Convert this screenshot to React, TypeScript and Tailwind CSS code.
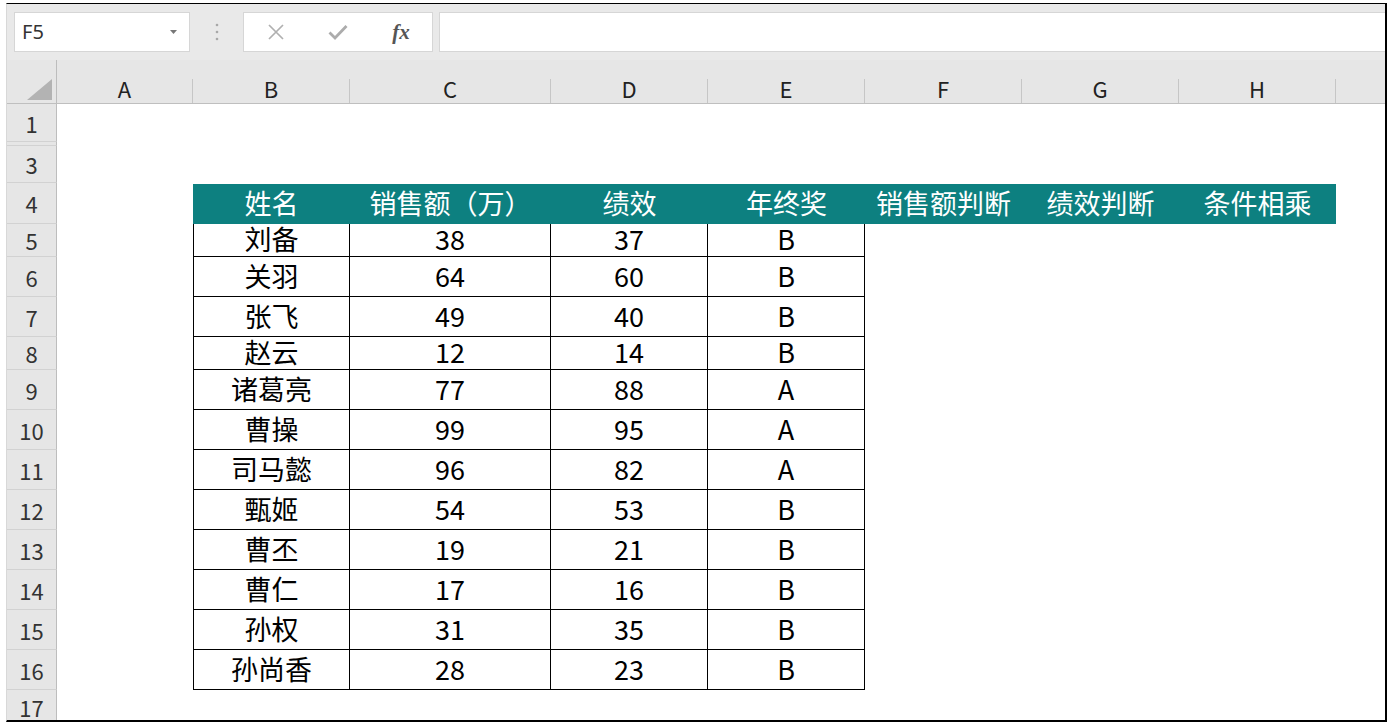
import React from "react";

const COLS = [
  { key: "A", w: "w-[136px]" },
  { key: "B", w: "w-[157px]" },
  { key: "C", w: "w-[201px]" },
  { key: "D", w: "w-[157px]" },
  { key: "E", w: "w-[157px]" },
  { key: "F", w: "w-[157px]" },
  { key: "G", w: "w-[157px]" },
  { key: "H", w: "w-[157px]" },
];

const HEAD = ["姓名", "销售额（万）", "绩效", "年终奖", "销售额判断", "绩效判断", "条件相乘"];

const DATA: [number, string, number, number, string, string][] = [
  [5, "刘备", 38, 37, "B", "h-[33px]"],
  [6, "关羽", 64, 60, "B", "h-[40px]"],
  [7, "张飞", 49, 40, "B", "h-[40px]"],
  [8, "赵云", 12, 14, "B", "h-[33px]"],
  [9, "诸葛亮", 77, 88, "A", "h-[40px]"],
  [10, "曹操", 99, 95, "A", "h-[40px]"],
  [11, "司马懿", 96, 82, "A", "h-[40px]"],
  [12, "甄姬", 54, 53, "B", "h-[40px]"],
  [13, "曹丕", 19, 21, "B", "h-[40px]"],
  [14, "曹仁", 17, 16, "B", "h-[40px]"],
  [15, "孙权", 31, 35, "B", "h-[40px]"],
  [16, "孙尚香", 28, 23, "B", "h-[40px]"],
];

const font = "font-['Noto_Sans_CJK_SC','Noto_Sans',sans-serif]";
const cell = "shrink-0 border-r border-b border-black flex items-center justify-center pb-[3px] text-[27px] leading-none text-black";

function RowHead({ n, h }: { n?: number; h: string }) {
  return (
    <div
      className={`${h} w-[50px] shrink-0 bg-[#e6e6e6] border-r border-[#bdbdbd] border-b border-b-[#d2d2d2] flex items-center justify-center text-[22px] leading-none text-[#333]`}
    >
      {n}
    </div>
  );
}

function EmptyRow({ n, h }: { n?: number; h: string }) {
  return (
    <div className="flex">
      <RowHead n={n} h={h} />
      <div className={`${h} flex-1 bg-white`} />
    </div>
  );
}

export default function App() {
  return (
    <div className={`w-[1388px] h-[723px] bg-white pt-[3px] pl-[6px] ${font}`}>
      <div className="w-[1381px] h-[719px] border-t border-t-black border-r-2 border-r-black border-b-2 border-b-black border-l border-l-[#d8d8d8] overflow-hidden flex flex-col">
        {/* Formula bar */}
        <div className="h-[56px] shrink-0 bg-[#e9e9e9] flex items-start pt-[8px] pl-[7px]">
          <div className="w-[176px] h-[40px] bg-white border border-[#d6d6d6] flex items-center justify-between pl-[7px] pr-[12px]">
            <span className="text-[20px] text-[#333] font-['Noto_Sans',sans-serif]">F5</span>
            <svg width="7" height="4" viewBox="0 0 7 4">
              <path d="M0 0h7L3.5 4z" fill="#777" />
            </svg>
          </div>
          <div className="w-[53px] h-[40px] flex items-center justify-center">
            <svg width="4" height="18" viewBox="0 0 4 18">
              <circle cx="2" cy="2" r="1.3" fill="#a8a8a8" />
              <circle cx="2" cy="9" r="1.3" fill="#a8a8a8" />
              <circle cx="2" cy="16" r="1.3" fill="#a8a8a8" />
            </svg>
          </div>
          <div className="w-[190px] h-[40px] bg-white border border-[#d6d6d6] flex items-center">
            <div className="w-[62px] flex justify-center pl-[2px]">
              <svg width="18" height="18" viewBox="0 0 18 18">
                <path d="M2 2l14 14M16 2L2 16" stroke="#b0b0b0" strokeWidth="1.7" />
              </svg>
            </div>
            <div className="w-[64px] flex justify-center">
              <svg width="20" height="16" viewBox="0 0 20 16">
                <path d="M1.5 8.5l5.5 5.5L18.5 2" stroke="#acacac" strokeWidth="2.8" fill="none" />
              </svg>
            </div>
            <div className="w-[62px] flex justify-center">
              <span className="font-['Liberation_Serif',serif] italic font-bold text-[21px] text-[#555] leading-none">
                fx
              </span>
            </div>
          </div>
          <div className="ml-[6px] flex-1 h-[40px] bg-white border border-[#d6d6d6] border-r-0" />
        </div>

        {/* Column headers */}
        <div className="h-[44px] shrink-0 flex bg-[#e6e6e6] border-b border-[#bfbfbf]">
          <div className="w-[50px] shrink-0 border-r border-[#bdbdbd] flex items-end justify-end pr-[4px] pb-[3px]">
            <svg width="25" height="21" viewBox="0 0 25 21">
              <path d="M25 0V21H0z" fill="#b3b3b3" />
            </svg>
          </div>
          {COLS.map((c) => (
            <div key={c.key} className={`${c.w} shrink-0 flex flex-col justify-end`}>
              <div className="h-[24px] border-r border-[#c6c6c6] flex items-center justify-center pb-[6px] text-[22px] leading-none text-[#222]">
                {c.key}
              </div>
            </div>
          ))}
          <div className="flex-1" />
        </div>

        {/* Body */}
        <div className="flex flex-col">
          <EmptyRow n={1} h="h-[38px]" />
          <EmptyRow h="h-[4px]" />
          <EmptyRow n={3} h="h-[37px]" />

          {/* Header row */}
          <div className="flex">
            <RowHead n={4} h="h-[41px]" />
            <div className="w-[136px] h-[41px] shrink-0 bg-white" />
            <div className="h-[41px] pt-[1px] flex">
              {HEAD.map((t, i) => (
                <div
                  key={t}
                  className={`${COLS[i + 1].w} h-[40px] shrink-0 bg-[#0d8080] flex items-center justify-center pb-[3px] text-white text-[27px] leading-none`}
                >
                  {t}
                </div>
              ))}
            </div>
          </div>

          {DATA.map(([n, name, s, p, g, h]) => (
            <div key={n} className="flex">
              <RowHead n={n} h={h} />
              <div className={`w-[136px] ${h} shrink-0 bg-white`} />
              <div className={`w-[157px] ${h} border-l ${cell}`}>{name}</div>
              <div className={`w-[201px] ${h} ${cell}`}>{s}</div>
              <div className={`w-[157px] ${h} ${cell}`}>{p}</div>
              <div className={`w-[157px] ${h} ${cell}`}>{g}</div>
              <div className={`flex-1 ${h} bg-white`} />
            </div>
          ))}

          <EmptyRow n={17} h="h-[34px]" />
        </div>
      </div>
    </div>
  );
}
